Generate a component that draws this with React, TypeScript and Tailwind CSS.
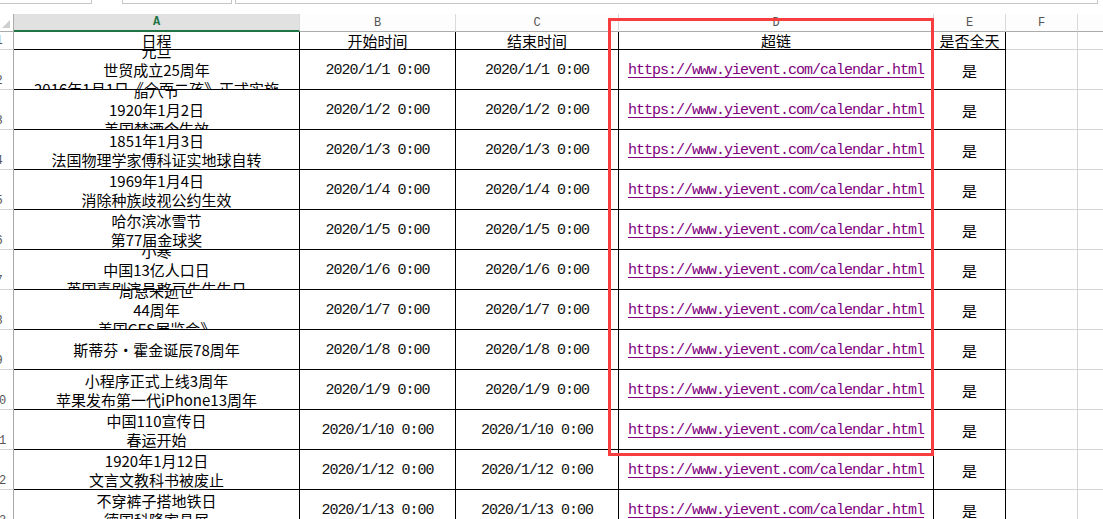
import React from 'react';

// --- Sheet data ---
const rows: { n: number; lines: string[]; date: string }[] = [
  { n: 2, lines: ['元旦', '世贸成立25周年', '2016年1月1日《全面二孩》正式实施'], date: '2020/1/1 0:00' },
  { n: 3, lines: ['腊八节', '1920年1月2日', '美国禁酒令生效'], date: '2020/1/2 0:00' },
  { n: 4, lines: ['1851年1月3日', '法国物理学家傅科证实地球自转'], date: '2020/1/3 0:00' },
  { n: 5, lines: ['1969年1月4日', '消除种族歧视公约生效'], date: '2020/1/4 0:00' },
  { n: 6, lines: ['哈尔滨冰雪节', '第77届金球奖'], date: '2020/1/5 0:00' },
  { n: 7, lines: ['小寒', '中国13亿人口日', '英国喜剧演员憨豆先生生日'], date: '2020/1/6 0:00' },
  { n: 8, lines: ['周恩来逝世', '44周年', '美国CES展览会》'], date: '2020/1/7 0:00' },
  { n: 9, lines: ['斯蒂芬·霍金诞辰78周年'], date: '2020/1/8 0:00' },
  { n: 10, lines: ['小程序正式上线3周年', '苹果发布第一代iPhone13周年'], date: '2020/1/9 0:00' },
  { n: 11, lines: ['中国110宣传日', '春运开始'], date: '2020/1/10 0:00' },
  { n: 12, lines: ['1920年1月12日', '文言文教科书被废止'], date: '2020/1/12 0:00' },
  { n: 13, lines: ['不穿裤子搭地铁日', '德国科隆家具展'], date: '2020/1/13 0:00' },
];

const URL = 'https://www.yievent.com/calendar.html';

const cjk = "font-['Noto_Sans_CJK_SC',sans-serif]";
const mono = "font-['Liberation_Mono','Noto_Sans_CJK_SC',monospace]";

// black-bordered table cell
const cell = 'shrink-0 h-full border-r border-b border-black overflow-hidden flex flex-col items-center justify-center';
// plain gridline cell
const grid = 'shrink-0 h-full border-r border-b border-[#d4d4d4]';

const RowHeader: React.FC<{ n: number }> = ({ n }) => (
  <div className="shrink-0 w-[14px] h-full border-r border-b border-r-[#a9a9a9] border-b-[#d4d4d4] overflow-hidden flex items-end pb-[2px]">
    <div className="shrink-0 w-[30px] -ml-[16px] text-center text-[12px] leading-[12px] text-[#555] font-['Liberation_Mono',monospace]">
      {n}
    </div>
  </div>
);

const SheetRow: React.FC<{ n: number; h: string; children: React.ReactNode }> = ({ n, h, children }) => (
  <div className={`flex ${h}`}>
    <RowHeader n={n} />
    {children}
    <div className={`${grid} w-[72px]`} />
    <div className="flex-1 h-full border-b border-[#d4d4d4]" />
  </div>
);

const ColLetter: React.FC<{ w: string; label: string; active?: boolean }> = ({ w, label, active }) => (
  <div
    className={`shrink-0 ${w} h-full flex items-center justify-center border-r border-[#dadada] text-[12px] font-['Liberation_Mono',monospace] ${
      active ? 'bg-[#e1e1e1] text-[#217346] font-bold border-b-2 border-b-[#217346]' : 'bg-[#fdfdfd] text-[#555] border-b border-b-[#ababab]'
    }`}
  >
    {label}
  </div>
);

const App: React.FC = () => {
  return (
    <div className="relative w-[1103px] h-[519px] overflow-hidden bg-white text-black">
      {/* --- toolbar remnants at the very top --- */}
      <div className="h-[14px] flex items-start">
        <div className="h-[4px] w-[92px] border-r border-b border-[#c6c6c6]" />
        <div className="h-[4px] w-[110px] ml-[30px] border-l border-r border-b border-[#c6c6c6]" />
        <div className="h-[4px] flex-1 ml-[3px] mr-[5px] border-l border-r border-b border-[#c6c6c6]" />
      </div>

      {/* --- column letters --- */}
      <div className="flex h-[18px]">
        <div className="shrink-0 w-[14px] h-full border-r border-b border-[#ababab] flex items-end justify-start pl-[2px] pb-[3px]">
          <svg width="8" height="8" viewBox="0 0 8 8">
            <polygon points="8,0 8,8 0,8" fill="#cfcfcf" />
          </svg>
        </div>
        <ColLetter w="w-[286px]" label="A" active />
        <ColLetter w="w-[156px]" label="B" />
        <ColLetter w="w-[163px]" label="C" />
        <ColLetter w="w-[315px]" label="D" />
        <ColLetter w="w-[72px]" label="E" />
        <ColLetter w="w-[72px]" label="F" />
        <div className="flex-1 h-full bg-[#fdfdfd] border-b border-[#ababab]" />
      </div>

      {/* --- header row --- */}
      <SheetRow n={1} h="h-[18px]">
        <div className={`${cell} w-[286px] ${cjk} text-[15px] leading-[18px]`}>日程</div>
        <div className={`${cell} w-[156px] ${cjk} text-[15px] leading-[18px]`}>开始时间</div>
        <div className={`${cell} w-[163px] ${cjk} text-[15px] leading-[18px]`}>结束时间</div>
        <div className={`${cell} w-[315px] ${cjk} text-[15px] leading-[18px]`}>超链</div>
        <div className={`${cell} w-[72px] ${cjk} text-[15px] leading-[18px]`}>是否全天</div>
      </SheetRow>

      {/* --- data rows --- */}
      {rows.map((r) => (
        <SheetRow key={r.n} n={r.n} h="h-[40px]">
          <div className={`${cell} w-[286px] ${cjk} text-[15px] leading-[19px] whitespace-nowrap`}>
            {r.lines.map((l, i) => (
              <div key={i} className="shrink-0">{l}</div>
            ))}
          </div>
          <div className={`${cell} w-[156px] pt-[4px] ${mono} text-[15px] text-[#111] tracking-[-1px] whitespace-pre`}>{r.date}</div>
          <div className={`${cell} w-[163px] pt-[4px] ${mono} text-[15px] text-[#111] tracking-[-1px] whitespace-pre`}>{r.date}</div>
          <div className={`${cell} w-[315px] pt-[4px] ${mono} text-[15px] tracking-[-1px]`}>
            <a className="text-[#800080] underline underline-offset-[3px] decoration-1">{URL}</a>
          </div>
          <div className={`${cell} w-[72px] pt-[3px] ${cjk} text-[15px]`}>是</div>
        </SheetRow>
      ))}

      {/* --- red annotation box over column D --- */}
      <div className="absolute left-[608px] top-[18px] w-[326px] h-[438px] border-[3px] border-[#f73d3d] pointer-events-none" />
    </div>
  );
};

export default App;
